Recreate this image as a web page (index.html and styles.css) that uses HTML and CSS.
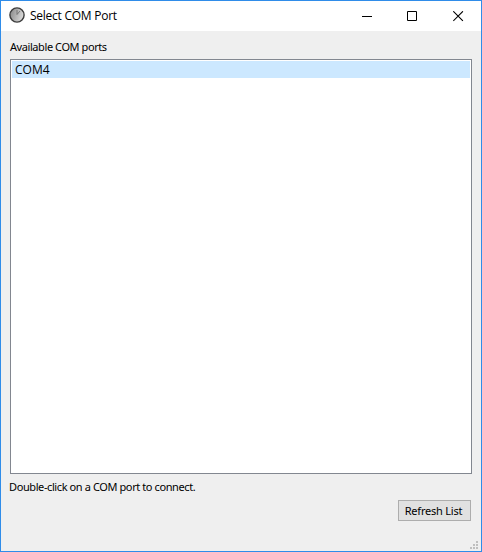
FILE: index.html
```
<!DOCTYPE html>
<html lang="en">
<head>
<meta charset="utf-8">
<title>Select COM Port</title>
<link rel="stylesheet" href="styles.css">
</head>
<body>
<div class="window">
  <header class="titlebar">
    <svg class="app-icon" width="16" height="16" viewBox="0 0 16 16" aria-hidden="true">
      <defs><linearGradient id="dial" x1="0" y1="0" x2="1" y2="0.3"><stop offset="0" stop-color="#858585"/><stop offset="1" stop-color="#d8d8d8"/></linearGradient></defs>
      <circle cx="8" cy="8" r="7.1" fill="url(#dial)" stroke="#3c3c3c" stroke-width="1.4"/>
      <path d="M8 7.5V3M8 7.5l3-3.5" fill="none" stroke="#666" stroke-width=".8"/>
    </svg>
    <h1 class="title"><span>Select COM Port</span></h1>
    <div class="controls">
      <button class="control" aria-label="Minimize"><svg width="11" height="11" viewBox="0 0 11 11"><path d="M0 5.5h10" stroke="#000"/></svg></button>
      <button class="control" aria-label="Maximize"><svg width="11" height="11" viewBox="0 0 11 11"><path d="M.5 .5h9v9h-9z" fill="none" stroke="#000"/></svg></button>
      <button class="control" aria-label="Close"><svg width="11" height="11" viewBox="0 0 11 11"><path d="M.3 .3l9.6 9.6M9.9 .3L.3 9.9" stroke="#000" stroke-width="1.1"/></svg></button>
    </div>
  </header>
  <main class="content">
    <div class="label"><span>Available COM ports</span></div>
    <ul class="ports"><li class="port"><span>COM4</span></li></ul>
    <div class="hint"><span>Double-click on a COM port to connect.</span></div>
    <div class="actions"><button class="refresh"><span>Refresh List</span></button></div>
  </main>
  <svg class="grip" width="8" height="8" viewBox="0 0 8 8" fill="#bfbfbf" aria-hidden="true">
    <path d="M6 0h2v2h-2zM3 3h2v2h-2zM6 3h2v2h-2zM0 6h2v2h-2zM3 6h2v2h-2zM6 6h2v2h-2z"/>
  </svg>
</div>
</body>
</html>
```
FILE: styles.css
```
* { box-sizing: border-box; }
body { margin: 0; }
.window {
  position: relative;
  width: 482px;
  height: 552px;
  border: 1px solid #2f8ce9;
  background: #efefef;
  color: #000;
  font: 11px/16px "Noto Sans", sans-serif;
}
.titlebar {
  display: flex;
  align-items: center;
  height: 30px;
  padding-left: 8px;
  background: #fff;
}
.app-icon { margin-top: -2px; }
.title {
  margin: 0 0 0 5px;
  font: 12px/16px "Open Sans", sans-serif;
  letter-spacing: -0.25px;
}
.controls { display: flex; margin-left: auto; }
.control {
  display: grid;
  place-items: center;
  width: 45px;
  height: 29px;
  padding: 0;
  border: 0;
  background: none;
}
.control:last-child { width: 46px; }
.content { display: flex; flex-direction: column; padding: 8px 9px 0; }
.label { height: 20px; letter-spacing: -0.42px; }
.ports {
  width: 462px;
  height: 415px;
  margin: 0;
  padding: 1px;
  border: 1px solid #828790;
  background: #fff;
  list-style: none;
}
.port {
  height: 17px;
  padding-left: 3px;
  background: #cce8ff;
  font: 12px/17px "Open Sans", sans-serif;
}
.hint { height: 26px; margin-left: -1px; padding-top: 5px; letter-spacing: -0.4px; }
.actions { display: flex; justify-content: flex-end; padding-right: 1px; }
.refresh {
  width: 73px;
  height: 21px;
  padding: 0 2px 0 0;
  border: 1px solid #adadad;
  background: #e1e1e1;
  color: #000;
  font: inherit;
  letter-spacing: -0.22px;
}
.grip { position: absolute; right: 3px; bottom: 2px; }
```
